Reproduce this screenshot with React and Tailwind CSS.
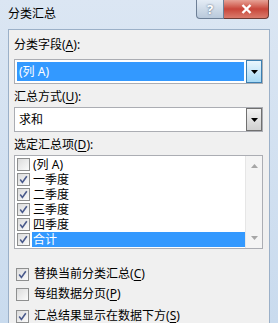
import React from "react";

function Check({ on }) {
  return (
    <span className="w-[13px] h-[13px] shrink-0 border border-[#8e8f8f] bg-gradient-to-br from-[#dcdcdc] to-[#fbfbfb] flex items-center justify-center">
      {on && (
        <svg width="9" height="9" viewBox="0 0 9 9">
          <path d="M1.2 4.6 L3.4 7.4 L7.8 1.2" fill="none" stroke="#4a5a8c" strokeWidth="1.6" />
        </svg>
      )}
    </span>
  );
}

function Arrow() {
  return (
    <svg width="7" height="4" viewBox="0 0 7 4">
      <path d="M0 0 H7 L3.5 4 Z" fill="#000" />
    </svg>
  );
}

function Combo({ text, focused }) {
  return (
    <div className="h-[25px] border border-[#abadb3] bg-white flex items-stretch">
      <div className="flex-1 p-[2px] flex">
        <div className={`flex-1 flex items-center pl-[2px] ${focused ? "bg-[#3399ff] text-white" : "text-black"}`}>{text}</div>
      </div>
      <div className={`w-[16px] border flex items-center justify-center ${focused ? "border-[#3c7fb1] bg-gradient-to-b from-[#eaf6fd] to-[#a7d9f5]" : "border-[#707070] bg-gradient-to-b from-[#f2f2f2] to-[#d0d0d0]"}`}>
        <Arrow />
      </div>
    </div>
  );
}

function Key({ children }) {
  return <span className="underline underline-offset-2">{children}</span>;
}

function Option({ on, label, k }) {
  return (
    <div className="flex items-center gap-[5px] pl-[2px]">
      <Check on={on} />
      <span>{label}(<Key>{k}</Key>)</span>
    </div>
  );
}

export default function App() {
  const items = [
    { t: "(列 A)", on: false },
    { t: "一季度", on: true },
    { t: "二季度", on: true },
    { t: "三季度", on: true },
    { t: "四季度", on: true },
    { t: "合计", on: true, sel: true },
  ];
  return (
    <div className="w-[278px] h-[323px] overflow-hidden bg-gradient-to-b from-[#dbe6f3] to-[#c9dbee] flex flex-col text-[12px] leading-[16px] text-black" style={{ fontFamily: '"Noto Sans", "Noto Sans CJK SC", sans-serif' }}>
      <div className="relative h-[29px] shrink-0 flex items-center pl-[8px] pb-[2px] text-[12px] text-black">
        分类汇总
        <div className="absolute top-0 left-[196px] flex">
          <div className="w-[28px] h-[19px] rounded-bl-[4px] border border-t-0 border-[#6d7f96] bg-gradient-to-b from-[#e4ecf5] to-[#b9c9db] flex items-center justify-center text-[13px] font-bold text-white" style={{ textShadow: "0 0 2px #3b4f6b" }}>?</div>
          <div className="w-[45px] h-[19px] rounded-br-[4px] border border-t-0 border-l-0 border-[#6d3a33] bg-gradient-to-b from-[#e6a196] via-[#c8453a] to-[#d97a6c] flex items-center justify-center">
            <svg width="11" height="10" viewBox="0 0 11 10">
              <path d="M1.5 1 L9.5 9 M9.5 1 L1.5 9" stroke="#fff" strokeWidth="2.4" />
            </svg>
          </div>
        </div>
      </div>
      <div className="flex-1 ml-[8px] mr-[8px] bg-[#f0f0f0] border-t border-l border-r border-[#9bb0c8] pl-[5px] pr-[6px] pt-[7px]">
        <div>分类字段(<Key>A</Key>):</div>
        <div className="mt-[6px]"><Combo text="(列 A)" focused /></div>
        <div className="mt-[5px]">汇总方式(<Key>U</Key>):</div>
        <div className="mt-[2px]"><Combo text="求和" /></div>
        <div className="mt-[5px]">选定汇总项(<Key>D</Key>):</div>
        <div className="mt-[2px] border border-[#abadb3] bg-white flex">
          <div className="flex-1 py-[1px] pl-[2px]">
            {items.map((it) => (
              <div key={it.t} className="h-[15px] leading-[14px] flex items-center">
                <Check on={it.on} />
                <div className={`flex-1 h-[15px] flex items-center pl-[1px] ml-[2px] ${it.sel ? "bg-[#3399ff] text-white" : ""}`}>{it.t}</div>
              </div>
            ))}
          </div>
          <div className="w-[17px] bg-[#f4f4f4] border-l border-[#e6e6e6] flex flex-col justify-between items-center py-[8px]">
            <svg width="7" height="4" viewBox="0 0 7 4"><path d="M0 4 H7 L3.5 0 Z" fill="#a6a6a6" /></svg>
            <svg width="7" height="4" viewBox="0 0 7 4"><path d="M0 0 H7 L3.5 4 Z" fill="#a6a6a6" /></svg>
          </div>
        </div>
        <div className="mt-[17px]"><Option on label="替换当前分类汇总" k="C" /></div>
        <div className="mt-[4px]"><Option label="每组数据分页" k="P" /></div>
        <div className="mt-[6px]"><Option on label="汇总结果显示在数据下方" k="S" /></div>
      </div>
    </div>
  );
}
